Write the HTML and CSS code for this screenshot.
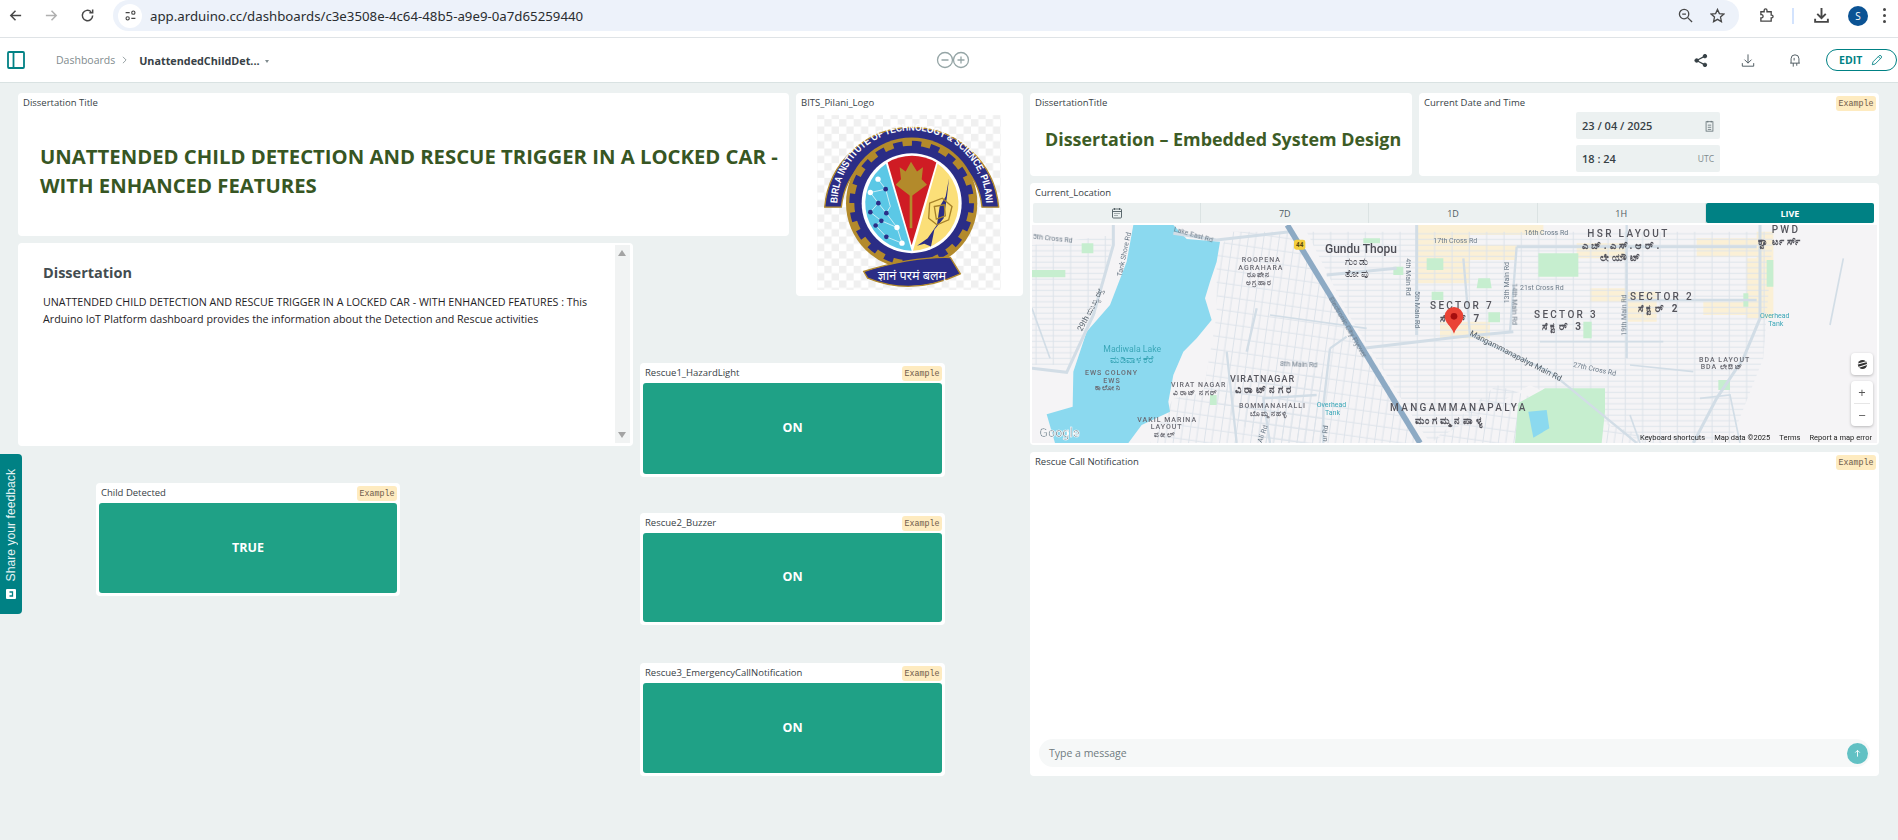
FILE: index.html
```html
<!DOCTYPE html>
<html lang="en">

<head>
    <meta charset="UTF-8">
    <title>Arduino Cloud Dashboard</title>
    <link rel="stylesheet" href="styles.css">
</head>

<body>
    <!-- browser toolbar -->
    <div class="browser-bar">
        <svg class="nav-icon" viewBox="0 0 16 16"><path d="M14 8H3M8 3 3 8l5 5" /></svg>
        <svg class="nav-icon nav-off" viewBox="0 0 16 16"><path d="M2 8h11M8 3l5 5-5 5" /></svg>
        <svg class="nav-icon" viewBox="0 0 16 16"><path d="M13.5 8A5.5 5.5 0 1 1 11.8 4M13.5 1.5V5H10" /></svg>
        <div class="address-bar">
            <span class="site-info">
                <svg viewBox="0 0 16 16"><path d="M2 4.500h5M9 11.500h5" /><circle cx="11.500" cy="4.500" r="2" /><circle cx="4.500" cy="11.500" r="2" /></svg>
            </span>
            <span class="url">app.arduino.cc/dashboards/c3e3508e-4c64-48b5-a9e9-0a7d65259440</span>
            <svg class="bar-icon" viewBox="0 0 16 16"><circle cx="6.500" cy="6.500" r="5" /><path d="M4.500 6.500h4M10.300 10.300 15 15" /></svg>
            <svg class="bar-icon star" viewBox="0 0 16 16"><path d="m8 1.500 2 4.500 4.800.500-3.600 3.200 1 4.800L8 12.100l-4.200 2.400 1-4.800L1.200 6.500 6 6z" /></svg>
        </div>
        <svg class="bar-icon ext" viewBox="0 0 16 16"><path d="M2 4h3.500V2.500a1.500 1.500 0 0 1 3 0V4H13v3.500h.5a1.500 1.500 0 0 1 0 3H13V14H2v-3.500h1a1.800 1.800 0 0 0 0-3.500H2z" /></svg>
        <span class="bar-sep"></span>
        <svg class="bar-icon dl" viewBox="0 0 16 16"><path d="M8 1v9M4 6.500 8 10.500l4-4M2 11v3h12v-3" /></svg>
        <span class="avatar">S</span>
        <span class="dots"><i></i><i></i><i></i></span>
    </div>

    <!-- app header -->
    <header class="app-header">
        <svg class="side-icon" viewBox="0 0 18 18"><rect x="1" y="1" width="16" height="16" rx="1" /><path d="M6.500 1v16" /></svg>
        <span class="crumb">Dashboards</span>
        <svg class="crumb-arrow" viewBox="0 0 6 10"><path d="m1 1 4 4-4 4" /></svg>
        <span class="crumb-current">UnattendedChildDet...</span>
        <span class="caret"></span>
        <svg class="infinity" viewBox="0 0 36 18"><circle cx="10" cy="9" r="7.500" /><circle cx="26" cy="9" r="7.500" /><path d="M6.500 9h7M22.500 9h7M26 5.500v7" /></svg>
        <div class="header-actions">
            <svg class="head-icon share" viewBox="0 0 16 16"><circle cx="12.500" cy="3" r="2" /><circle cx="12.500" cy="13" r="2" /><circle cx="3" cy="8" r="2" /><path d="m12.500 3-9.500 5 9.500 5" /></svg>
            <svg class="head-icon" viewBox="0 0 16 16"><path d="M8 1v10M4 7l4 4 4-4M1.500 11v3.500h13V11" /></svg>
            <svg class="head-icon led" viewBox="0 0 16 16"><path d="M3.500 11V6a4.500 4.500 0 0 1 9 0v5M2.500 11h11M6 11v4M10 11v3M7 5v3" /></svg>
            <button class="edit-btn">EDIT
                <svg viewBox="0 0 14 14"><path d="m1.500 12.500.8-3.300 7-7a1.500 1.500 0 0 1 2.500 2.500l-7 7zM8.500 3l2.500 2.500" /></svg>
            </button>
        </div>
    </header>

    <main class="dashboard">
        <section class="left-grid">
            <div class="card area-title">
                <div class="card-head"><span class="card-label">Dissertation Title</span></div>
                <div class="big-title">UNATTENDED CHILD DETECTION AND RESCUE TRIGGER IN A LOCKED CAR - WITH ENHANCED FEATURES</div>
            </div>

            <div class="card area-logo">
                <div class="card-head"><span class="card-label">BITS_Pilani_Logo</span></div>
                <svg class="logo" viewBox="110 76 552 524">
                    <defs>
                        <pattern id="checks" width="44" height="44" patternUnits="userSpaceOnUse">
                            <rect width="44" height="44" fill="#fff" />
                            <rect width="22" height="22" fill="#f0f0f0" />
                            <rect x="22" y="22" width="22" height="22" fill="#f0f0f0" />
                        </pattern>
                        <path id="arc-text" d="M171 345A223 223 0 0 1 617 345" />
                    </defs>
                    <rect x="110" y="76" width="552" height="524" fill="url(#checks)" />
                    <path d="M133 352A262 262 0 0 1 655 352H605A212 212 0 0 0 183 352Z" fill="#2b2d86" stroke="#b38a2b" stroke-width="4" />
                    <text class="logo-arc"><textPath href="#arc-text" startOffset="50%" text-anchor="middle" textLength="690" lengthAdjust="spacingAndGlyphs">BIRLA INSTITUTE OF TECHNOLOGY &amp; SCIENCE, PILANI</textPath></text>
                    <circle cx="394" cy="340" r="197" fill="#b38a2b" />
                    <circle cx="394" cy="340" r="172" fill="#2b2d86" />
                    <circle cx="394" cy="340" r="172" fill="none" stroke="#2b2d86" stroke-width="30" stroke-dasharray="27 27" />
                    <circle cx="394" cy="340" r="150" fill="#fff" />
                    <path d="M317 222A143 143 0 0 0 394 483Z" fill="#5bc8e6" />
                    <path d="M322 218A143 143 0 0 1 468 218L394 466Z" fill="#cf1c24" />
                    <path d="M472 222A143 143 0 0 1 398 483Z" fill="#fbdf78" />
                    <path d="M293 268 316 298 270 308 294 340 270 367 303 393 286 407 318 441 365 460 350 413 318 370 294 340M316 298 330 350 318 370M303 393 350 413" fill="none" stroke="#fff" stroke-width="2" />
                    <g fill="#2b2d86"><circle cx="316" cy="298" r="7" /><circle cx="294" cy="340" r="7" /><circle cx="270" cy="367" r="7" /><circle cx="318" cy="370" r="7" /><circle cx="303" cy="393" r="7" /><circle cx="286" cy="407" r="7" /><circle cx="318" cy="441" r="7" /></g>
                    <g fill="#fff"><circle cx="293" cy="268" r="8" /><circle cx="270" cy="308" r="8" /><circle cx="350" cy="413" r="8" /><circle cx="365" cy="460" r="8" /></g>
                    <path d="M392 216 410 245 428 232 424 268 440 285 392 320 346 285 362 268 358 232 376 245Z" fill="#b38a2b" />
                    <path d="M388 310h8v105h-8z" fill="#b38a2b" />
                    <path d="M506 265 496 320 478 350 470 405 442 445 410 468 432 462 452 470 462 420 490 385 500 320Z" fill="#2b2d86" />
                    <path d="M448 340 486 325 515 350 505 390 470 405 445 385ZM462 350 492 345 495 378 468 388Z" fill="none" stroke="#a5812a" stroke-width="4" />
                    <path d="M250 545Q395 500 510 503L540 552Q395 620 262 565Z" fill="#2b2d86" stroke="#b38a2b" stroke-width="4" />
                    <text class="logo-motto" x="395" y="570" text-anchor="middle">ज्ञानं परमं बलम्</text>
                </svg>
            </div>

            <div class="card area-about">
                <div class="about-body">
                    <h2>Dissertation</h2>
                    <p>UNATTENDED CHILD DETECTION AND RESCUE TRIGGER IN A LOCKED CAR - WITH ENHANCED FEATURES : This Arduino IoT Platform dashboard provides the information about the Detection and Rescue activities</p>
                </div>
                <div class="scrollbar"><span class="arrow-up"></span><span class="arrow-down"></span></div>
            </div>

            <div class="card area-child">
                <div class="card-head"><span class="card-label">Child Detected</span><span class="badge">Example</span></div>
                <div class="status-box">TRUE</div>
            </div>

            <div class="card area-rescue1">
                <div class="card-head"><span class="card-label">Rescue1_HazardLight</span><span class="badge">Example</span></div>
                <div class="status-box">ON</div>
            </div>

            <div class="card area-rescue2">
                <div class="card-head"><span class="card-label">Rescue2_Buzzer</span><span class="badge">Example</span></div>
                <div class="status-box">ON</div>
            </div>

            <div class="card area-rescue3">
                <div class="card-head"><span class="card-label">Rescue3_EmergencyCallNotification</span><span class="badge">Example</span></div>
                <div class="status-box">ON</div>
            </div>
        </section>

        <section class="right-col">
            <div class="top-row">
                <div class="card">
                    <div class="card-head"><span class="card-label">DissertationTitle</span></div>
                    <div class="sub-title">Dissertation – Embedded System Design</div>
                </div>
                <div class="card">
                    <div class="card-head"><span class="card-label">Current Date and Time</span><span class="badge">Example</span></div>
                    <div class="date-fields">
                        <div class="date-field"><b>23 / 04 / 2025</b>
                            <svg viewBox="0 0 10 14"><rect x="1" y="2" width="8" height="11" /><path d="M3 1v2M7 1v2M3 6h4M3 8.500h4M3 11h4" /></svg>
                        </div>
                        <div class="date-field"><b>18 : 24</b><span>UTC</span></div>
                    </div>
                </div>
            </div>

            <div class="card">
                <div class="card-head"><span class="card-label">Current_Location</span></div>
                <div class="range-tabs">
                    <span class="range-tab">
                        <svg viewBox="0 0 12 12"><rect x="1.500" y="2" width="9" height="9" rx="1" /><path d="M1.500 4.500h9M3.500 1v2M8.500 1v2M3.500 6.500h1M5.500 6.500h1M7.500 6.500h1M3.500 8.500h1M5.500 8.500h1" /></svg>
                    </span>
                    <span class="range-tab">7D</span>
                    <span class="range-tab">1D</span>
                    <span class="range-tab">1H</span>
                    <span class="range-tab is-live">LIVE</span>
                </div>
                <div class="map">
                    <svg class="map-art" viewBox="6 0 2535 654">
                        <defs>
                            <pattern id="streets" width="52" height="34" patternUnits="userSpaceOnUse">
                                <path d="M0 9H52M0 26H52M18 0V34" fill="none" stroke="#dde3ea" stroke-width="3" />
                            </pattern>
                            <pattern id="streets-tilt" width="46" height="40" patternUnits="userSpaceOnUse" patternTransform="rotate(8)">
                                <path d="M0 12H46M10 0V40M32 0V40" fill="none" stroke="#dde3ea" stroke-width="3" />
                            </pattern>
                        </defs>
                        <rect x="0" width="2550" height="660" fill="#f5f4f6" />

                        <!-- built-up yellow blocks -->
                        <g fill="#fbf0d6">
                            <path d="M1160 0h160v175h-160zM1230 290h150v50h-150zM1290 60h170v45h-170zM1640 55h150v45h-150zM1680 190h110v40h-110z" />
                            <path d="M1790 200h90v90h-90zM2000 40h190v55h-190zM2150 100h40v180h-40zM2020 230h170v40h-170zM2180 20h50v260h-50zM1290 0h250v30h-250z" />
                        </g>

                        <!-- street blocks -->
                        <path d="M6 60 250 30 200 260 120 420 6 420Z" fill="url(#streets)" />
                        <path d="M600 20 780 20 1010 370 1180 654 700 654 520 500 560 270 560 90Z" fill="url(#streets-tilt)" />
                        <path d="M830 20 1900 20 2230 20 2200 400 2100 654 1840 654 1500 480 1200 654 1100 500 950 260Z" fill="url(#streets)" />
                        <path d="M1400 480 1900 654 1300 654 1200 654Z" fill="url(#streets-tilt)" />
                        <path d="M430 520 880 440 880 654 360 654Z" fill="url(#streets-tilt)" />

                        <!-- parks -->
                        <g fill="#c6eecf">
                            <path d="M1525 85h120v70h-120zM1545 490h180v70l-10 94h-260l10-120zM1345 160h35l5 30h-45zM1190 100h50v35h-50zM1205 200h35v25h-35zM1660 290h25v50h-25z" />
                            <path d="M2210 105h20v80h-20zM2140 205h15v40h-15zM2065 465h35v30h-35zM155 55h35v30h-35zM6 135h100v22H6zM1000 40h50v15h-50zM1090 125h30v25h-30zM1375 262h35v30h-35zM540 510h20v30h-20z" />
                        </g>

                        <!-- water -->
                        <path class="water" d="M310 0 430 0 470 42 570 50 560 110 540 170 525 220 545 285 500 340 460 380 430 450 415 530 420 560 335 600 295 654 75 654 50 568 128 545 130 440 170 320 240 240 290 110Z" />
                        <path class="water" d="M1495 560 1550 555 1558 610 1510 638Z" />

                        <!-- minor and major roads -->
                        <g fill="none" stroke="#d2dde6">
                            <path stroke-width="9" d="M6 430 110 442 190 270 250 60 250 0M430 25 560 45 780 20M890 150 1100 130M1000 370 1290 335 1450 320M1160 0V330M1460 65H2180M2190 0 2190 280 2140 400 2060 520 1990 654" />
                            <path stroke-width="7" d="M1790 0V400M1320 330 1560 440 1820 654M900 370 880 540 880 654M900 370 950 335M720 654 700 520 860 510M1790 225H2180M590 380 620 654M680 250 650 380M1300 100 1320 330M1460 65 1440 320" />
                            <path stroke-width="5" d="M2010 520 2100 510 2130 654M1530 350H1900M1800 420 1990 440M6 250 60 400M720 270 1010 310M2440 100 2400 300" />
                        </g>
                        <path d="M772 0 1170 654" stroke="#8daac4" stroke-width="17" fill="none" />
                        <path d="M1800 570 1830 654" stroke="#d2dde6" stroke-width="5" fill="none" />

                        <rect x="792" y="44" width="34" height="30" rx="7" fill="#f4cf3f" />
                        <text class="lb-shield" x="809" y="66" text-anchor="middle">44</text>

                        <!-- map labels -->
                        <g class="lb-road">
                            <text x="8" y="42" transform="rotate(6 8 42)">5th Cross Rd</text>
                            <text x="430" y="20" transform="rotate(16 430 20)">Lake East Rd</text>
                            <text x="275" y="155" transform="rotate(-78 275 155)">Tank Shore Rd</text>
                            <text x="895" y="222" transform="rotate(60 895 222)">Electronic City Flyover</text>
                            <text x="750" y="422" transform="rotate(2 750 422)">8th Main Rd</text>
                            <text x="1128" y="100" transform="rotate(90 1128 100)">4th Main Rd</text>
                            <text x="1156" y="198" transform="rotate(90 1156 198)">5th Main Rd</text>
                            <text x="1210" y="53">17th Cross Rd</text>
                            <text x="1483" y="30">16th Cross Rd</text>
                            <text x="1470" y="195">21st Cross Rd</text>
                            <text x="1438" y="235" transform="rotate(-90 1438 235)">13th Main Rd</text>
                            <text x="1447" y="175" transform="rotate(90 1447 175)">14th Main Rd</text>
                            <text x="1788" y="332" transform="rotate(-90 1788 332)">19th Main Rd</text>
                            <text x="1318" y="330" transform="rotate(27 1318 330)" class="lb-dark">Mangammanapalya Main Rd</text>
                            <text x="1628" y="425" transform="rotate(12 1628 425)">27th Cross Rd</text>
                            <text x="695" y="654" transform="rotate(-70 695 654)">Ali Rd</text>
                            <text x="890" y="650" transform="rotate(-85 890 650)">ur Rd</text>
                            <text x="155" y="320" transform="rotate(-62 155 320)" class="lb-dark">29th <tspan class="kn">ಮುಖ್ಯ ರಸ್ತೆ</tspan></text>
                        </g>
                        <g class="lb-area">
                            <text x="635" y="112">ROOPENA</text>
                            <text x="625" y="135">AGRAHARA</text>
                            <text x="650" y="157" class="kn">ರೂಪೇನ</text>
                            <text x="648" y="180" class="kn">ಅಗ್ರಹಾರ</text>
                            <text x="165" y="450">EWS COLONY</text>
                            <text x="220" y="473">EWS</text>
                            <text x="195" y="495" class="kn">ಕಾಲೋನಿ</text>
                            <text x="423" y="487">VIRAT NAGAR</text>
                            <text x="430" y="510" class="kn">ವಿರಾಟ್ ನಗರ್</text>
                            <text x="627" y="548">BOMMANAHALLI</text>
                            <text x="660" y="572" class="kn">ಬೊಮ್ಮನಹಳ್ಳಿ</text>
                            <text x="322" y="590">VAKIL MARINA</text>
                            <text x="362" y="612">LAYOUT</text>
                            <text x="372" y="636" class="kn">ವಕೀಲ್</text>
                            <text x="2007" y="410">BDA LAYOUT</text>
                            <text x="2012" y="432">BDA <tspan class="kn">ಲೇಔಟ್</tspan></text>
                        </g>
                        <g class="lb-big">
                            <text x="600" y="472" class="lb-tight">VIRATNAGAR</text>
                            <text x="615" y="503" class="kn">ವಿರಾಟ್‌ನಗರ</text>
                            <text x="1080" y="557">MANGAMMANAPALYA</text>
                            <text x="1155" y="596" class="kn">ಮಂಗಮ್ಮನಪಾಳ್ಯ</text>
                            <text x="1200" y="253">SECTOR 7</text>
                            <text x="1230" y="290" class="kn">ಸೆಕ್ಟರ್ 7</text>
                            <text x="1672" y="35">HSR LAYOUT</text>
                            <text x="1655" y="72" class="kn">ಎಚ್.ಎಸ್.ಆರ್.</text>
                            <text x="1710" y="107" class="kn">ಲೇಯೌಟ್</text>
                            <text x="2225" y="25">PWD</text>
                            <text x="2185" y="60" class="kn">ಕ್ವಾರ್ಟರ್ಸ್</text>
                            <text x="1800" y="225">SECTOR 2</text>
                            <text x="1825" y="262" class="kn">ಸೆಕ್ಟರ್ 2</text>
                            <text x="1512" y="278">SECTOR 3</text>
                            <text x="1535" y="315" class="kn">ಸೆಕ್ಟರ್ 3</text>
                        </g>
                        <g class="lb-gundu">
                            <text x="885" y="84">Gundu Thopu</text>
                            <text x="945" y="120" class="kn">ಗುಂಡು</text>
                            <text x="945" y="157" class="kn">ತೋಪು</text>
                        </g>
                        <g class="lb-water">
                            <text x="220" y="380">Madiwala Lake</text>
                            <text x="240" y="414" class="kn">ಮಡಿವಾಳ ಕೆರೆ</text>
                            <text x="860" y="546" class="lb-small">Overhead</text>
                            <text x="885" y="569" class="lb-small">Tank</text>
                            <text x="2190" y="280" class="lb-small">Overhead</text>
                            <text x="2215" y="303" class="lb-small">Tank</text>
                        </g>
                        <text class="lb-google" x="28" y="636">Google</text>

                        <path d="M1272 326C1262 300 1244 294 1244 274A28 28 0 0 1 1300 274C1300 294 1282 300 1272 326Z" fill="#ea4335" />
                        <circle cx="1272" cy="274" r="10" fill="#a50e0e" />
                    </svg>

                    <div class="map-buttons">
                        <span class="map-btn">
                            <svg viewBox="0 0 12 12"><circle cx="6" cy="6" r="5" fill="#333" /><path d="M1 5.500 10 3M2 9l9-3" stroke="#fff" stroke-width="1.200" /></svg>
                        </span>
                        <span class="map-btn map-zoom"><i>+</i><em></em><i>−</i></span>
                    </div>
                    <div class="map-legal">
                        <span>Keyboard shortcuts</span><span>Map data ©2025</span><span>Terms</span><span>Report a map error</span>
                    </div>
                </div>
            </div>

            <div class="card chat-card">
                <div class="card-head"><span class="card-label">Rescue Call Notification</span><span class="badge">Example</span></div>
                <div class="chat-space"></div>
                <div class="chat-input">
                    <span>Type a message</span>
                    <span class="send-btn">
                        <svg viewBox="0 0 10 10"><path d="M5 8.500v-7M2.500 4 5 1.500 7.500 4" /></svg>
                    </span>
                </div>
            </div>
        </section>
    </main>

    <!-- feedback tab stuck over the left edge -->
    <div class="feedback">
        <span>Share your feedback</span>
        <svg viewBox="0 0 10 10"><rect width="10" height="10" rx="1" fill="#fff" /><path d="M3 3.500v3h4v-3" fill="none" stroke="#008184" stroke-width="1.300" /></svg>
    </div>
</body>

</html>
```

FILE: styles.css
```css
* {
    box-sizing: border-box;
}

html,
body {
    margin: 0;
    height: 840px;
    overflow: hidden;
}

body {
    font-family: "Open Sans", "Noto Sans", sans-serif;
    background-color: #ecf1f1;
    color: #374146;
}

svg {
    display: block;
}

/* browser toolbar */
.browser-bar {
    display: flex;
    align-items: center;
    height: 38px;
    padding: 0 0 6px 8px;
    background-color: #fff;
    border-bottom: 1px solid #dfe3e6;
}

.nav-icon {
    width: 15px;
    height: 15px;
    margin-right: 21px;
    fill: none;
    stroke: #474747;
    stroke-width: 1.6;
}

.nav-off {
    stroke: #b0b0b0;
}

.address-bar {
    display: flex;
    align-items: center;
    width: 1626px;
    height: 31px;
    margin-left: -3px;
    padding: 0 14px 0 5px;
    background-color: #edf2fa;
    border-radius: 16px;
}

.site-info {
    display: flex;
    align-items: center;
    justify-content: center;
    width: 24px;
    height: 24px;
    background-color: #fff;
    border-radius: 50%;
}

.site-info svg {
    width: 13px;
    height: 13px;
    fill: none;
    stroke: #444;
    stroke-width: 1.4;
}

.url {
    flex: 1;
    margin-left: 8px;
    font-family: "Noto Sans", sans-serif;
    font-size: 13.250px;
    color: #2a2d30;
}

.bar-icon {
    width: 15px;
    height: 15px;
    fill: none;
    stroke: #474747;
    stroke-width: 1.4;
}

.star {
    margin-left: 17px;
}

.ext {
    margin-left: 20px;
}

.bar-sep {
    width: 2px;
    height: 16px;
    margin-left: 18px;
    background-color: #d3e3fd;
}

.dl {
    margin-left: 19px;
    width: 17px;
    height: 17px;
    stroke-width: 1.8;
}

.avatar {
    display: flex;
    align-items: center;
    justify-content: center;
    width: 20px;
    height: 20px;
    margin-left: 18px;
    background-color: #0b5394;
    border-radius: 50%;
    color: #fff;
    font-size: 10px;
}

.dots {
    display: flex;
    flex-direction: column;
    gap: 3px;
    margin-left: 15px;
}

.dots i {
    width: 3px;
    height: 3px;
    background-color: #474747;
    border-radius: 50%;
}

/* app header */
.app-header {
    position: relative;
    display: flex;
    align-items: center;
    height: 45px;
    padding-left: 7px;
    background-color: #fff;
    border-bottom: 1px solid #d9e2e2;
}

.side-icon {
    width: 18px;
    height: 18px;
    fill: none;
    stroke: #008184;
    stroke-width: 1.800;
}

.crumb {
    margin-left: 31px;
    font-size: 10.500px;
    color: #7f8b8e;
}

.crumb-arrow {
    width: 5px;
    height: 8px;
    margin-left: 7px;
    fill: none;
    stroke: #7f8b8e;
}

.crumb-current {
    margin-left: 12px;
    font-size: 10.800px;
    font-weight: 700;
    color: #374146;
}

.caret {
    margin-left: 5px;
    margin-top: 2px;
    border: 2.500px solid transparent;
    border-top: 3px solid #7f8b8e;
    border-bottom: 0;
}

.infinity {
    position: absolute;
    left: 935px;
    top: 13px;
    width: 36px;
    height: 18px;
    fill: none;
    stroke: #95a5a6;
    stroke-width: 1.300;
}

.header-actions {
    display: flex;
    align-items: center;
    margin-left: auto;
    margin-right: 1px;
}

.head-icon {
    width: 14px;
    height: 15px;
    margin-right: 33px;
    fill: none;
    stroke: #4e5b61;
    stroke-width: 1.100;
}

.share {
    stroke: #374146;
    fill: #374146;
}

.share path {
    fill: none;
    stroke-width: 1.300;
}

.led {
    margin-right: 24px;
}

.edit-btn {
    display: flex;
    align-items: center;
    gap: 9px;
    width: 71px;
    height: 22px;
    padding: 0 0 0 12px;
    background-color: #fff;
    border: 1px solid #008184;
    border-radius: 11px;
    font-family: inherit;
    font-size: 10.500px;
    font-weight: 700;
    color: #008184;
}

.edit-btn svg {
    width: 12px;
    height: 12px;
    fill: none;
    stroke: #008184;
}

/* dashboard */
.dashboard {
    display: flex;
    gap: 7px;
    padding: 10px 19px 0 18px;
}

.left-grid {
    display: grid;
    flex: none;
    width: 1005px;
    grid-template-columns: 78px 304px 233px 7px 149px 7px 149px 78px;
    grid-template-rows: 143px 7px 53px 67px 83px 31px 6px 30px 83px 29px 38px 113px;
}

.right-col {
    display: grid;
    flex: none;
    width: 849px;
    grid-template-rows: 83px 262px 324px;
    gap: 7px;
}

.card {
    display: flex;
    flex-direction: column;
    min-width: 0;
    padding: 3px;
    background-color: #fff;
    border-radius: 4px;
}

.area-title {
    grid-column: 1 / 6;
    grid-row: 1 / 2;
}

.area-logo {
    grid-column: 7 / 9;
    grid-row: 1 / 4;
}

.area-about {
    grid-column: 1 / 4;
    grid-row: 3 / 6;
    flex-direction: row;
    padding: 2px 3px 3px 25px;
}

.area-child {
    grid-column: 2 / 3;
    grid-row: 8 / 10;
}

.area-rescue1 {
    grid-column: 5 / 8;
    grid-row: 5 / 7;
}

.area-rescue2 {
    grid-column: 5 / 8;
    grid-row: 9 / 11;
}

.area-rescue3 {
    grid-column: 5 / 8;
    grid-row: 12 / 13;
}

.card-head {
    display: flex;
    align-items: flex-start;
    justify-content: space-between;
    flex: none;
    height: 17px;
    padding-left: 2px;
}

.card-label {
    font-size: 9.500px;
    line-height: 13px;
    color: #374146;
}

.badge {
    flex: none;
    width: 40px;
    height: 15px;
    background-color: #feebc0;
    border-radius: 3px;
    font-family: "Liberation Mono", monospace;
    font-size: 8.300px;
    line-height: 15px;
    text-align: center;
    color: #6d5a4a;
}

.big-title {
    margin: 29px 0 0 19px;
    font-size: 20.300px;
    font-weight: 700;
    line-height: 29px;
    color: #375623;
}

.logo {
    width: 184px;
    height: 175px;
    margin: 2px 0 0 18px;
}

.logo-arc {
    font-family: "Liberation Sans", sans-serif;
    font-size: 30px;
    font-weight: 700;
    fill: #fff;
}

.logo-motto {
    font-family: "Noto Sans", sans-serif;
    font-size: 38px;
    fill: #fff;
}

.about-body {
    flex: 1;
    padding-right: 18px;
}

.about-body h2 {
    margin: 18px 0 0;
    font-size: 14.500px;
    font-weight: 700;
    line-height: 20px;
    color: #434c50;
}

.about-body p {
    margin: 11px 0 0;
    font-size: 10.700px;
    line-height: 17.300px;
    color: #1f2326;
}

.scrollbar {
    position: relative;
    flex: none;
    width: 15px;
    background-color: #f1f3f3;
}

.arrow-up,
.arrow-down {
    position: absolute;
    left: 3px;
    border: 4.500px solid transparent;
}

.arrow-up {
    top: 5px;
    border-bottom: 6px solid #a3a3a3;
    border-top: 0;
}

.arrow-down {
    bottom: 5px;
    border-top: 6px solid #a3a3a3;
    border-bottom: 0;
}

.status-box {
    display: flex;
    align-items: center;
    justify-content: center;
    flex: 1;
    padding-bottom: 2px;
    background-color: #1fa186;
    border-radius: 3px;
    font-size: 12.500px;
    font-weight: 700;
    color: #fff;
}

.top-row {
    display: grid;
    grid-template-columns: 382px 460px;
    gap: 7px;
}

.sub-title {
    margin: 14px 0 0 12px;
    font-size: 17.900px;
    font-weight: 700;
    white-space: nowrap;
    color: #3d5c26;
}

.date-fields {
    display: flex;
    flex-direction: column;
    gap: 6px;
    width: 144px;
    margin: -1px 0 0 154px;
}

.date-field {
    display: flex;
    align-items: center;
    justify-content: space-between;
    height: 27px;
    padding: 0 6px;
    background-color: #ecf1f1;
    border-radius: 2px;
    font-size: 11px;
}

.date-field b {
    font-weight: 600;
}

.date-field span {
    font-size: 8.500px;
    color: #7f8b8e;
}

.date-field svg {
    width: 9px;
    height: 12px;
    fill: none;
    stroke: #5c6b70;
    stroke-width: 0.900;
}

.range-tabs {
    display: grid;
    flex: none;
    grid-template-columns: repeat(5, 1fr);
    height: 20px;
    margin-right: 2px;
    background-color: #ecf1f1;
    border-radius: 2px;
}

.range-tab {
    display: flex;
    align-items: center;
    justify-content: center;
    border-right: 1px solid #dbe3e3;
    font-size: 9px;
    color: #4e5b61;
}

.range-tab svg {
    width: 12px;
    height: 12px;
    fill: none;
    stroke: #4e5b61;
    stroke-width: 0.900;
}

.is-live {
    background-color: #008184;
    border-right: 0;
    border-radius: 2px;
    font-weight: 700;
    color: #fff;
}

.map {
    position: relative;
    flex: none;
    height: 218px;
    margin: 2px -1px 0 -1px;
    overflow: hidden;
}

.map-art {
    width: 845px;
    height: 218px;
    filter: blur(0.35px);
}

.water {
    fill: #8bd9ef;
}

.map-art text {
    font-family: Roboto, "Noto Sans", sans-serif;
}

.lb-road {
    font-size: 21px;
    fill: #6b7a88;
}

.lb-road .lb-dark {
    font-size: 24px;
    fill: #55606a;
}

.lb-area {
    font-size: 21px;
    letter-spacing: 3px;
    font-weight: 500;
    fill: #6a6a72;
}

.lb-area .kn {
    font-size: 22px;
    letter-spacing: 4px;
    font-weight: 700;
}

.lb-big {
    font-size: 30px;
    letter-spacing: 7px;
    font-weight: 500;
    fill: #55555d;
}

.lb-big .lb-tight {
    font-size: 27px;
    letter-spacing: 3px;
}

.lb-big .kn {
    font-size: 30px;
    letter-spacing: 9px;
    font-weight: 700;
}

.lb-gundu {
    font-size: 36px;
    font-weight: 500;
    fill: #4d4d55;
}

.lb-gundu .kn {
    font-size: 30px;
    letter-spacing: 6px;
}

.lb-water {
    font-size: 26px;
    fill: #3ba7b8;
}

.lb-water .kn {
    font-size: 30px;
}

.lb-water .lb-small {
    font-size: 21px;
}

.lb-shield {
    font-size: 19px;
    font-weight: 700;
    fill: #5a4a10;
}

.lb-google {
    font-size: 38px;
    font-weight: 500;
    fill: #6f7f8b;
    stroke: #fff;
    stroke-width: 2;
}

.map-buttons {
    position: absolute;
    right: 4px;
    top: 128px;
    display: flex;
    flex-direction: column;
    gap: 6px;
}

.map-btn {
    display: flex;
    align-items: center;
    justify-content: center;
    width: 22px;
    height: 22px;
    background-color: #fff;
    border-radius: 4px;
    box-shadow: 0 1px 3px rgba(0, 0, 0, 0.25);
}

.map-btn svg {
    width: 11px;
    height: 11px;
}

.map-zoom {
    flex-direction: column;
    height: 45px;
}

.map-zoom i {
    flex: 1;
    font-style: normal;
    font-size: 13px;
    line-height: 22px;
    color: #555;
}

.map-zoom em {
    width: 16px;
    height: 1px;
    background-color: #e6e6e6;
}

.map-legal {
    position: absolute;
    right: 5px;
    bottom: 0;
    display: flex;
    gap: 9px;
    font-family: Roboto, sans-serif;
    font-size: 7.500px;
    line-height: 11px;
    color: #222;
}

.chat-space {
    flex: 1;
}

.chat-input {
    display: flex;
    align-items: center;
    justify-content: space-between;
    flex: none;
    height: 28px;
    margin: 0 6px 6px 6px;
    padding: 0 2px 0 10px;
    background-color: #f6f8f8;
    border-radius: 14px;
    font-size: 10.500px;
    color: #6f7b80;
}

.send-btn {
    display: flex;
    align-items: center;
    justify-content: center;
    width: 21px;
    height: 21px;
    background-color: #62c1c4;
    border-radius: 50%;
}

.send-btn svg {
    width: 9px;
    height: 9px;
    fill: none;
    stroke: #fff;
}

/* feedback tab */
.feedback {
    position: fixed;
    left: 0;
    top: 454px;
    display: flex;
    flex-direction: column;
    align-items: center;
    gap: 8px;
    width: 22px;
    height: 160px;
    padding-top: 15px;
    background-color: #008184;
    border-radius: 0 4px 4px 0;
    font-family: "Liberation Sans", sans-serif;
    font-size: 12.200px;
    color: #e6f3f3;
}

.feedback span {
    writing-mode: vertical-rl;
    transform: rotate(180deg);
}

.feedback svg {
    flex: none;
    width: 10px;
    height: 10px;
    transform: rotate(-90deg);
}
```
